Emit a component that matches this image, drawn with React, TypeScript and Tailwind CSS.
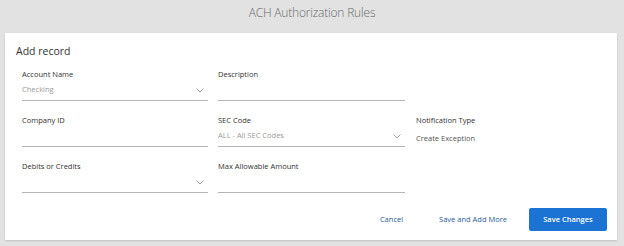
import React from "react";

const Chevron = () => (
  <svg width="8" height="5" viewBox="0 0 8 5" className="shrink-0">
    <path d="M0.5 0.5 L4 4 L7.5 0.5" fill="none" stroke="#9a9a9a" strokeWidth="0.9" />
  </svg>
);

const Field = ({ label, value, select }: { label: string; value?: string; select?: boolean }) => (
  <div className="flex flex-col">
    <div className="h-[12px] text-[7.5px] leading-[12px] text-[#333]">{label}</div>
    <div className="flex h-[21px] items-center justify-between border-b border-[#b5b5b5] pr-[4px]">
      <span className="text-[7.5px] text-[#9a9a9a]">{value}</span>
      {select && <Chevron />}
    </div>
  </div>
);

export default function App() {
  return (
    <div
      className="h-[246px] w-[624px] bg-[#e2e2e2] pt-[4px]"
      style={{ fontFamily: '"Open Sans", sans-serif' }}
    >
      <div className="text-center text-[12px] font-light leading-[18px] tracking-[-0.2px] text-[#6b6b6b]">
        ACH Authorization Rules
      </div>
      <div className="mx-[5px] mt-[11px] h-[207px] w-[612px] bg-white pt-[10px] shadow-[0_1px_2px_rgba(0,0,0,0.15)]">
        <div className="px-[11px] text-[10.5px] leading-[16px] text-[#333]">Add record</div>
        <div className="mt-[9px] grid grid-cols-[186px_187px_1fr] gap-x-[10px] gap-y-[13px] pl-[17px] pr-[10px]">
          <Field label="Account Name" value="Checking" select />
          <Field label="Description" />
          <div />
          <Field label="Company ID" />
          <Field label="SEC Code" value="ALL - All SEC Codes" select />
          <div className="flex flex-col pl-[1px]">
            <div className="h-[12px] text-[7.5px] leading-[12px] text-[#333]">Notification Type</div>
            <div className="mt-[6px] text-[7.5px] leading-[12px] text-[#555]">Create Exception</div>
          </div>
          <Field label="Debits or Credits" select />
          <Field label="Max Allowable Amount" />
          <div />
        </div>
        <div className="mt-[15px] flex items-center justify-end pr-[10px]">
          <button className="mr-[36px] text-[7.5px] text-[#2a5b9a]">Cancel</button>
          <button className="mr-[22px] text-[7.5px] text-[#2a5b9a]">Save and Add More</button>
          <button className="h-[23px] w-[78px] rounded-[2px] bg-[#1b74d3] text-[7.5px] font-semibold text-white">
            Save Changes
          </button>
        </div>
      </div>
    </div>
  );
}
